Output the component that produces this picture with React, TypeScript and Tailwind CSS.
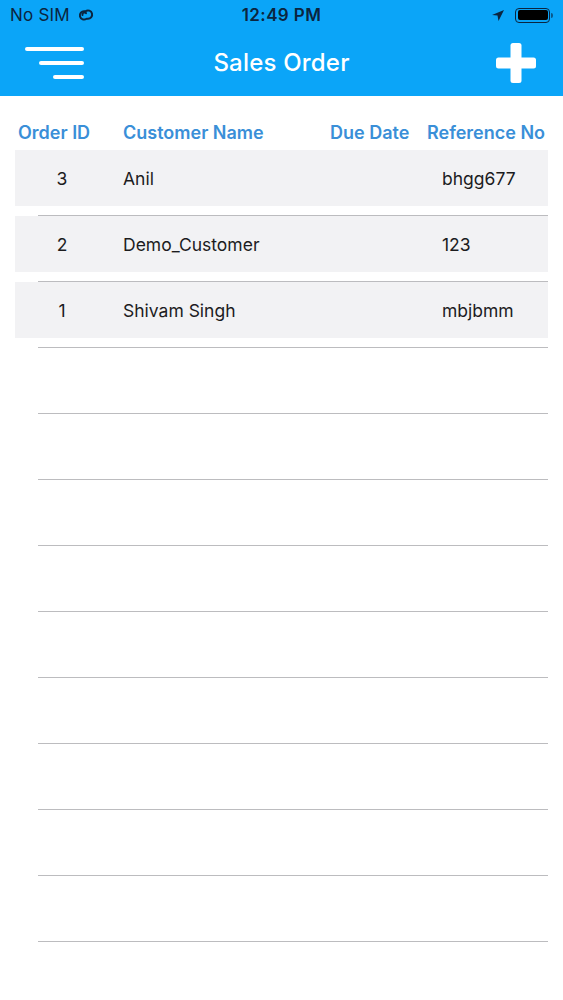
import React from 'react';

const FONT = { fontFamily: 'Inter, "Liberation Sans", Arial, sans-serif' };

type Order = { id: number; customer: string; dueDate: string; reference: string };

const ORDERS: Order[] = [
    { id: 3, customer: 'Anil', dueDate: '', reference: 'bhgg677' },
    { id: 2, customer: 'Demo_Customer', dueDate: '', reference: '123' },
    { id: 1, customer: 'Shivam Singh', dueDate: '', reference: 'mbjbmm' },
];

const EMPTY_ROWS = 10;

function StatusBar() {
    return (
        <div className="relative h-[30px] flex items-center px-[10px] text-[#0b2540]">
            <div className="flex items-center gap-[6px]">
                <span className="text-[17px] leading-none tracking-[0.2px]">No SIM</span>
                {/* hotspot link icon */}
                <svg width="20" height="14" viewBox="0 0 20 14" fill="none" stroke="currentColor" strokeWidth="2" strokeLinecap="round">
                    <path d="M8.5 3.2 A4.2 4.2 0 1 0 10.5 10.8" />
                    <path d="M11.5 10.8 A4.2 4.2 0 1 0 9.5 3.2" />
                    <path d="M6.5 7 A2 2 0 0 1 10 5.2" />
                </svg>
            </div>
            <span className="absolute left-0 right-0 text-center text-[17px] font-semibold leading-none tracking-[0.4px] pointer-events-none">
                12:49 PM
            </span>
            <div className="ml-auto flex items-center gap-[11px]">
                {/* location arrow */}
                <svg width="12" height="11" viewBox="0 0 12 11" fill="currentColor">
                    <path d="M12 0 L0 5 L5.5 5.5 L6.5 11 Z" />
                </svg>
                <div className="flex items-center">
                    <div className="w-[35px] h-[15px] rounded-[4px] border border-[#0b2540] p-[1.5px]">
                        <div className="w-full h-full rounded-[2px] bg-black" />
                    </div>
                    <div className="w-[2px] h-[5px] rounded-r-sm bg-[#0b2540] opacity-60 ml-[1px]" />
                </div>
            </div>
        </div>
    );
}

function NavBar() {
    return (
        <div className="relative h-[66px] flex items-center justify-between pl-[25px] pr-[27px]">
            <div className="flex flex-col items-end gap-[10px] w-[59px]">
                <div className="h-[4px] w-[59px] bg-white rounded-full" />
                <div className="h-[4px] w-[45px] bg-white rounded-full" />
                <div className="h-[4px] w-[31px] bg-white rounded-full" />
            </div>
            <h1 className="absolute left-0 right-0 text-center text-white text-[24px] font-medium tracking-[0.2px] pointer-events-none">
                Sales Order
            </h1>
            <svg width="40" height="40" viewBox="0 0 40 40" fill="white">
                <rect x="14.5" y="0" width="11" height="40" rx="2.5" />
                <rect x="0" y="14.5" width="40" height="11" rx="2.5" />
            </svg>
        </div>
    );
}

function OrderRow({ order }: { order: Order }) {
    return (
        <div className="h-[66px] flex flex-col">
            <div className="h-[56px] mx-[15px] pt-[2px] bg-[#f2f2f4] flex items-center text-[17.5px] text-[#1c1c1e]">
                <div className="w-[94px] text-center">{order.id}</div>
                <div className="w-[208px] pl-[14px]">{order.customer}</div>
                <div className="w-[111px]">{order.dueDate}</div>
                <div className="flex-1 pl-[14px]">{order.reference}</div>
            </div>
            <div className="flex-1" />
            <div className="h-px ml-[38px] mr-[15px] bg-[#bcbcbf]" />
        </div>
    );
}

function EmptyRow() {
    return (
        <div className="h-[66px] flex flex-col justify-end">
            <div className="h-px ml-[38px] mr-[15px] bg-[#bcbcbf]" />
        </div>
    );
}

export default function App() {
    return (
        <div className="h-screen overflow-hidden bg-white" style={FONT}>
            <div className="bg-[#0ba5f8]">
                <StatusBar />
                <NavBar />
            </div>

            {/* column headers */}
            <div className="flex pt-[26px] pb-[6px] pl-[18px] text-[18px] font-semibold text-[#3a8fd8] leading-[22px] whitespace-nowrap">
                <div className="w-[105px]">Order ID</div>
                <div className="w-[207px]">Customer Name</div>
                <div className="w-[97px]">Due Date</div>
                <div className="flex-1">Reference No</div>
            </div>

            <div>
                {ORDERS.map(o => (
                    <OrderRow key={o.id} order={o} />
                ))}
                {Array.from({ length: EMPTY_ROWS }).map((_, i) => (
                    <EmptyRow key={i} />
                ))}
            </div>
        </div>
    );
}
